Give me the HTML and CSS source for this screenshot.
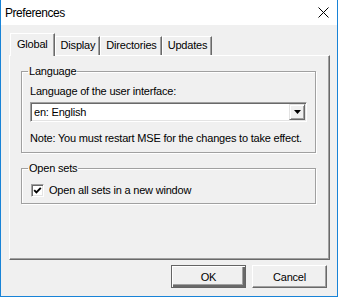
FILE: index.html
```html
<!DOCTYPE html>
<html lang="en">

<head>
    <meta charset="UTF-8">
    <meta name="viewport" content="width=device-width, initial-scale=1.0">
    <title>Preferences</title>
    <link rel="stylesheet" href="styles.css">
</head>

<body>
    <div class="window">
        <div class="titlebar">
            <span class="title">Preferences</span>
            <svg class="close" width="11" height="11" viewBox="0 0 11 11">
                <path d="M0.5 0.5 L10.5 10.5 M10.5 0.5 L0.5 10.5" stroke="#000" stroke-width="1" fill="none" />
            </svg>
        </div>
        <div class="client">
            <ul class="tabs">
                <li class="tab active">Global</li>
                <li class="tab">Display</li>
                <li class="tab">Directories</li>
                <li class="tab">Updates</li>
            </ul>
            <div class="panel">
                <fieldset class="group group-lang">
                    <legend>Language</legend>
                    <div class="label">Language of the user interface:</div>
                    <div class="combo">
                        <span class="combo-value">en: English</span>
                        <span class="combo-btn">
                            <svg width="7" height="4" viewBox="0 0 7 4">
                                <polygon points="0,0 7,0 3.5,4" fill="#000" />
                            </svg>
                        </span>
                    </div>
                    <div class="note">Note: You must restart MSE for the changes to take effect.</div>
                </fieldset>
                <fieldset class="group group-open">
                    <legend>Open sets</legend>
                    <label class="check">
                        <span class="box">
                            <svg width="9" height="9" viewBox="0 0 9 9">
                                <polyline points="1.2,4.2 3.4,6.4 7.8,1.8" stroke="#000" stroke-width="1.9" fill="none" />
                            </svg>
                        </span>
                        Open all sets in a new window
                    </label>
                </fieldset>
            </div>
            <div class="buttons">
                <button class="btn default">OK</button>
                <button class="btn">Cancel</button>
            </div>
        </div>
    </div>
</body>

</html>
```

FILE: styles.css
```css
* {
    margin: 0;
    padding: 0;
    box-sizing: border-box;
}

body {
    font-family: "Liberation Sans", Arial, sans-serif;
    font-size: 11px;
    letter-spacing: -0.2px;
    color: #000;
    background: #fff;
}

.window {
    width: 338px;
    height: 297px;
    border: 1px solid #1883d7;
    border-top: none;
    background: #f0f0f0;
    display: flex;
    flex-direction: column;
}

.titlebar {
    height: 25px;
    background: #fff;
    display: flex;
    align-items: center;
    justify-content: space-between;
    padding: 0 8px 0 4px;
}

.title {
    font-size: 12px;
    letter-spacing: -0.45px;
}

.close {
    display: block;
}

.client {
    flex: 1;
    padding: 8px 7px 0 8px;
    display: flex;
    flex-direction: column;
}

/* tab strip */
.tabs {
    display: flex;
    align-items: flex-end;
    height: 22px;
    list-style: none;
    padding-left: 1px;
}

.tab {
    height: 19px;
    line-height: 17px;
    padding: 0 4px 0 5px;
    border: 1px solid;
    border-color: #fff #696969 transparent #fff;
    box-shadow: inset -1px 0 0 #a0a0a0;
    border-bottom: none;
    white-space: nowrap;
}

.tab.active {
    height: 23px;
    margin-bottom: -1px;
    line-height: 20px;
    padding: 0 6px;
    background: #f0f0f0;
    position: relative;
    z-index: 1;
}

.panel {
    height: 205px;
    border: 1px solid;
    border-color: #fff #696969 #696969 #fff;
    box-shadow: inset -1px -1px 0 #a0a0a0;
    padding: 0 13px 0 11px;
}

/* group boxes */
.group {
    border: 1px solid #a0a0a0;
    box-shadow: 1px 1px 0 #fff, inset 1px 1px 0 #fff;
    padding: 0 8px;
    margin-top: 9px;
}

.group legend {
    line-height: 13px;
    padding: 0 1px;
    margin-left: -2px;
}

.label {
    margin-top: 7px;
    line-height: 13px;
}

.combo {
    margin-top: 4px;
    height: 20px;
    background: #fff;
    border: 1px solid;
    border-color: #a0a0a0 #fff #fff #a0a0a0;
    box-shadow: inset 1px 1px 0 #696969, inset -1px -1px 0 #e3e3e3;
    display: flex;
    align-items: center;
    justify-content: space-between;
    padding: 1px 1px 1px 3px;
}

.combo-btn {
    width: 16px;
    height: 16px;
    background: #f0f0f0;
    border: 1px solid;
    border-color: #e3e3e3 #696969 #696969 #e3e3e3;
    box-shadow: inset 1px 1px 0 #fff, inset -1px -1px 0 #a0a0a0;
    display: flex;
    align-items: center;
    justify-content: center;
}

.combo-btn svg {
    display: block;
}

.note {
    margin: 10px 0 7px;
    line-height: 13px;
    white-space: nowrap;
}

.check {
    display: flex;
    align-items: center;
    margin: 9px 0 6px 1px;
    line-height: 13px;
}

.box {
    width: 13px;
    height: 13px;
    margin-right: 5px;
    background: #fff;
    border: 1px solid;
    border-color: #a0a0a0 #fff #fff #a0a0a0;
    box-shadow: inset 1px 1px 0 #696969, inset -1px -1px 0 #e3e3e3;
    display: flex;
    align-items: center;
    justify-content: center;
}

.box svg {
    display: block;
}

/* dialog buttons */
.buttons {
    display: flex;
    justify-content: flex-end;
    gap: 6px;
    margin: 5px 3px 0 0;
}

.btn {
    width: 75px;
    height: 23px;
    font-family: inherit;
    font-size: 11px;
    letter-spacing: inherit;
    color: #000;
    background: #f0f0f0;
    border: 1px solid;
    border-color: #fff #696969 #696969 #fff;
    box-shadow: inset -1px -1px 0 #a0a0a0;
}

.btn.default {
    border: 1px solid #646464;
    box-shadow: inset 1px 1px 0 #fff, inset -2px -2px 0 #696969, inset -3px -3px 0 #a0a0a0;
}
```
